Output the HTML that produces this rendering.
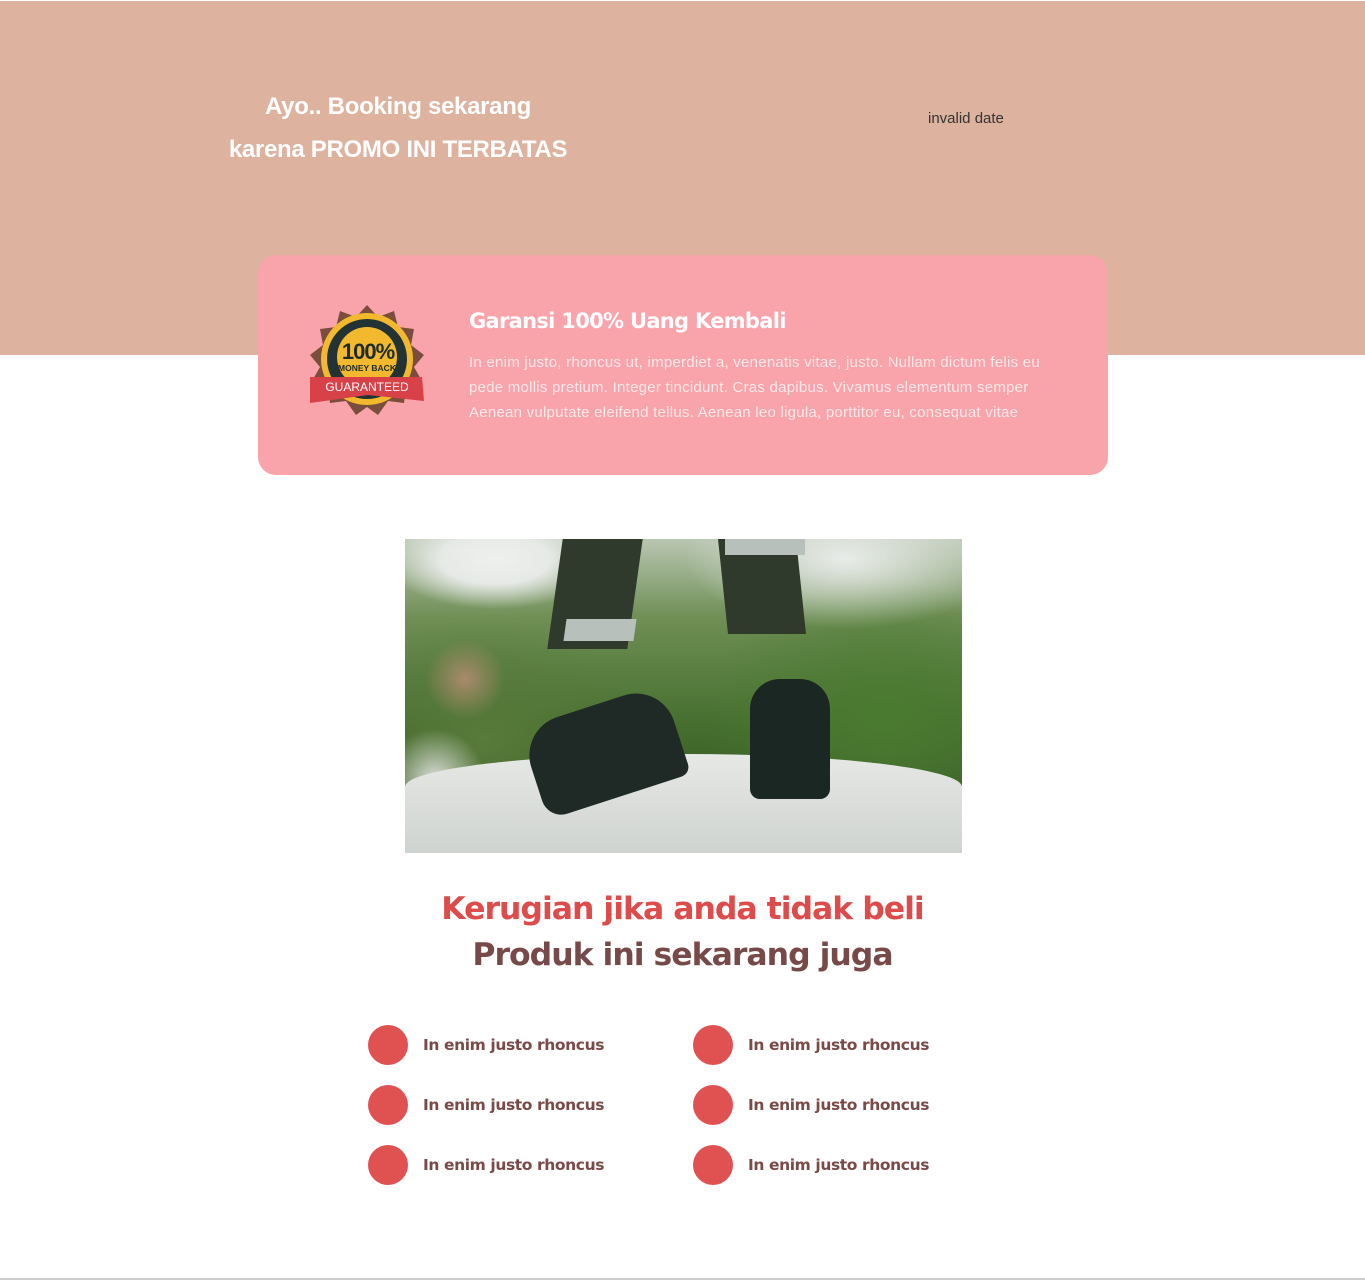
<!DOCTYPE html>
<html><head><meta charset="utf-8"><style>
html,body{margin:0;padding:0;width:1365px;height:1280px;background:#fff;font-family:"Liberation Sans",sans-serif;overflow:hidden;position:relative}
.top{position:absolute;left:0;top:1px;width:1365px;height:354px;background:#ddb29f}
.h1{position:absolute;left:0;width:796px;text-align:center;color:#fff;font-size:24px;font-weight:bold;letter-spacing:-0.3px}
.date{position:absolute;left:928px;top:110px;font-size:15px;color:#333}
.card{position:absolute;left:258px;top:255px;width:850px;height:220px;background:#f9a3aa;border-radius:18px}
.card h2{position:absolute;left:211px;top:54px;margin:0;color:#fff;font-size:21px;font-family:"DejaVu Sans","Liberation Sans",sans-serif;font-weight:bold;letter-spacing:-0.7px}
.card p{position:absolute;left:211px;top:95px;margin:0;white-space:nowrap;color:#fde8ea;font-size:15px;line-height:25px;letter-spacing:0.25px}
.photo{position:absolute;left:405px;top:539px;width:557px;height:314px;overflow:hidden;background:
radial-gradient(ellipse 110px 50px at 90px 20px,#eef0ee 0,#e6e9e6 50%,transparent 100%),
radial-gradient(ellipse 160px 70px at 440px 20px,#e9ecea 0,transparent 100%),
radial-gradient(circle 40px at 60px 140px,#a98a6c,transparent),
radial-gradient(circle 50px at 30px 240px,#d9ddd6,transparent),
radial-gradient(ellipse 160px 120px at 80px 200px,#587a3a,transparent),
radial-gradient(ellipse 180px 140px at 480px 180px,#4a7a30,transparent),
linear-gradient(#b9c6b2 0,#6f8f55 25%,#456e2e 60%,#2f4a22 100%)}
.t{position:absolute;width:1365px;text-align:center;font-family:"DejaVu Sans","Liberation Sans",sans-serif;font-weight:bold;font-size:31.5px;letter-spacing:-1px}
.item{position:absolute;height:40px}
.item i{position:absolute;left:0;top:0;width:40px;height:40px;border-radius:50%;background:#e05252}
.item span{position:absolute;left:55px;top:11px;white-space:nowrap;font-family:"DejaVu Sans","Liberation Sans",sans-serif;font-weight:bold;font-size:15.5px;color:#7a4a48;letter-spacing:-0.4px}
.bl{position:absolute;left:0;top:1278px;width:1365px;height:2px;background:#ccc}
</style></head><body>
<div class="top"></div>
<div class="h1" style="top:93px">Ayo.. Booking sekarang</div>
<div class="h1" style="top:136px">karena PROMO INI TERBATAS</div>
<div class="date">invalid date</div>
<div class="card">
<svg style="position:absolute;left:50px;top:48px" width="118" height="116" viewBox="0 0 118 116">
<polygon points="59,2 70,14 86,8 90,24 106,26 103,42 116,52 106,64 114,78 98,84 96,100 80,98 70,112 59,104 48,112 38,98 22,100 20,84 4,78 12,64 2,52 15,42 12,26 28,24 32,8 48,14" fill="#7a4d3c"/>
<circle cx="59" cy="56" r="46" fill="#f2b92e"/>
<circle cx="59" cy="56" r="40" fill="#233233"/>
<circle cx="59" cy="54" r="30" fill="#f2b92e"/>
<text x="60" y="56" text-anchor="middle" font-family="Liberation Sans" font-weight="bold" font-size="22" fill="#1e2b2c" letter-spacing="-1">100%</text>
<text x="59" y="68" text-anchor="middle" font-family="Liberation Sans" font-weight="bold" font-size="8.5" fill="#1e2b2c">MONEY BACK</text>
<path d="M2,74 L114,74 L116,98 L60,92 L2,100 Z" fill="#d94148"/>
<text x="59" y="88" text-anchor="middle" font-family="Liberation Sans" font-size="12" fill="#fff">GUARANTEED</text>
</svg>
<h2>Garansi 100% Uang Kembali</h2>
<p>In enim justo, rhoncus ut, imperdiet a, venenatis vitae, justo. Nullam dictum felis eu<br>pede mollis pretium. Integer tincidunt. Cras dapibus. Vivamus elementum semper<br>Aenean vulputate eleifend tellus. Aenean leo ligula, porttitor eu, consequat vitae</p>
</div>
<div class="photo">
<div style="position:absolute;left:150px;top:0;width:80px;height:110px;background:#2f3a2c;transform:skewX(-8deg)"></div>
<div style="position:absolute;left:160px;top:80px;width:70px;height:22px;background:#b8c0bb;transform:skewX(-8deg)"></div>
<div style="position:absolute;left:318px;top:0;width:78px;height:95px;background:#2f3a2c;transform:skewX(6deg)"></div>
<div style="position:absolute;left:320px;top:0;width:80px;height:16px;background:#b8c0bb"></div>
<div style="position:absolute;left:0;top:215px;width:557px;height:99px;background:linear-gradient(#e6e8e6,#cfd3cf);border-radius:60% 60% 0 0/40% 40% 0 0"></div>
<div style="position:absolute;left:125px;top:165px;width:150px;height:95px;background:#1f2a26;border-radius:40px 40px 10px 20px;transform:rotate(-18deg)"></div>
<div style="position:absolute;left:345px;top:140px;width:80px;height:120px;background:#1a2723;border-radius:30px 30px 10px 10px"></div>
</div>
<div class="t" style="top:891px;color:#dd4b4b">Kerugian jika anda tidak beli</div>
<div class="t" style="top:937px;color:#774a49">Produk ini sekarang juga</div>
<div class="item" style="left:368px;top:1025px"><i></i><span>In enim justo rhoncus</span></div>
<div class="item" style="left:693px;top:1025px"><i></i><span>In enim justo rhoncus</span></div>
<div class="item" style="left:368px;top:1085px"><i></i><span>In enim justo rhoncus</span></div>
<div class="item" style="left:693px;top:1085px"><i></i><span>In enim justo rhoncus</span></div>
<div class="item" style="left:368px;top:1145px"><i></i><span>In enim justo rhoncus</span></div>
<div class="item" style="left:693px;top:1145px"><i></i><span>In enim justo rhoncus</span></div>
<div class="bl"></div>
</body></html>
